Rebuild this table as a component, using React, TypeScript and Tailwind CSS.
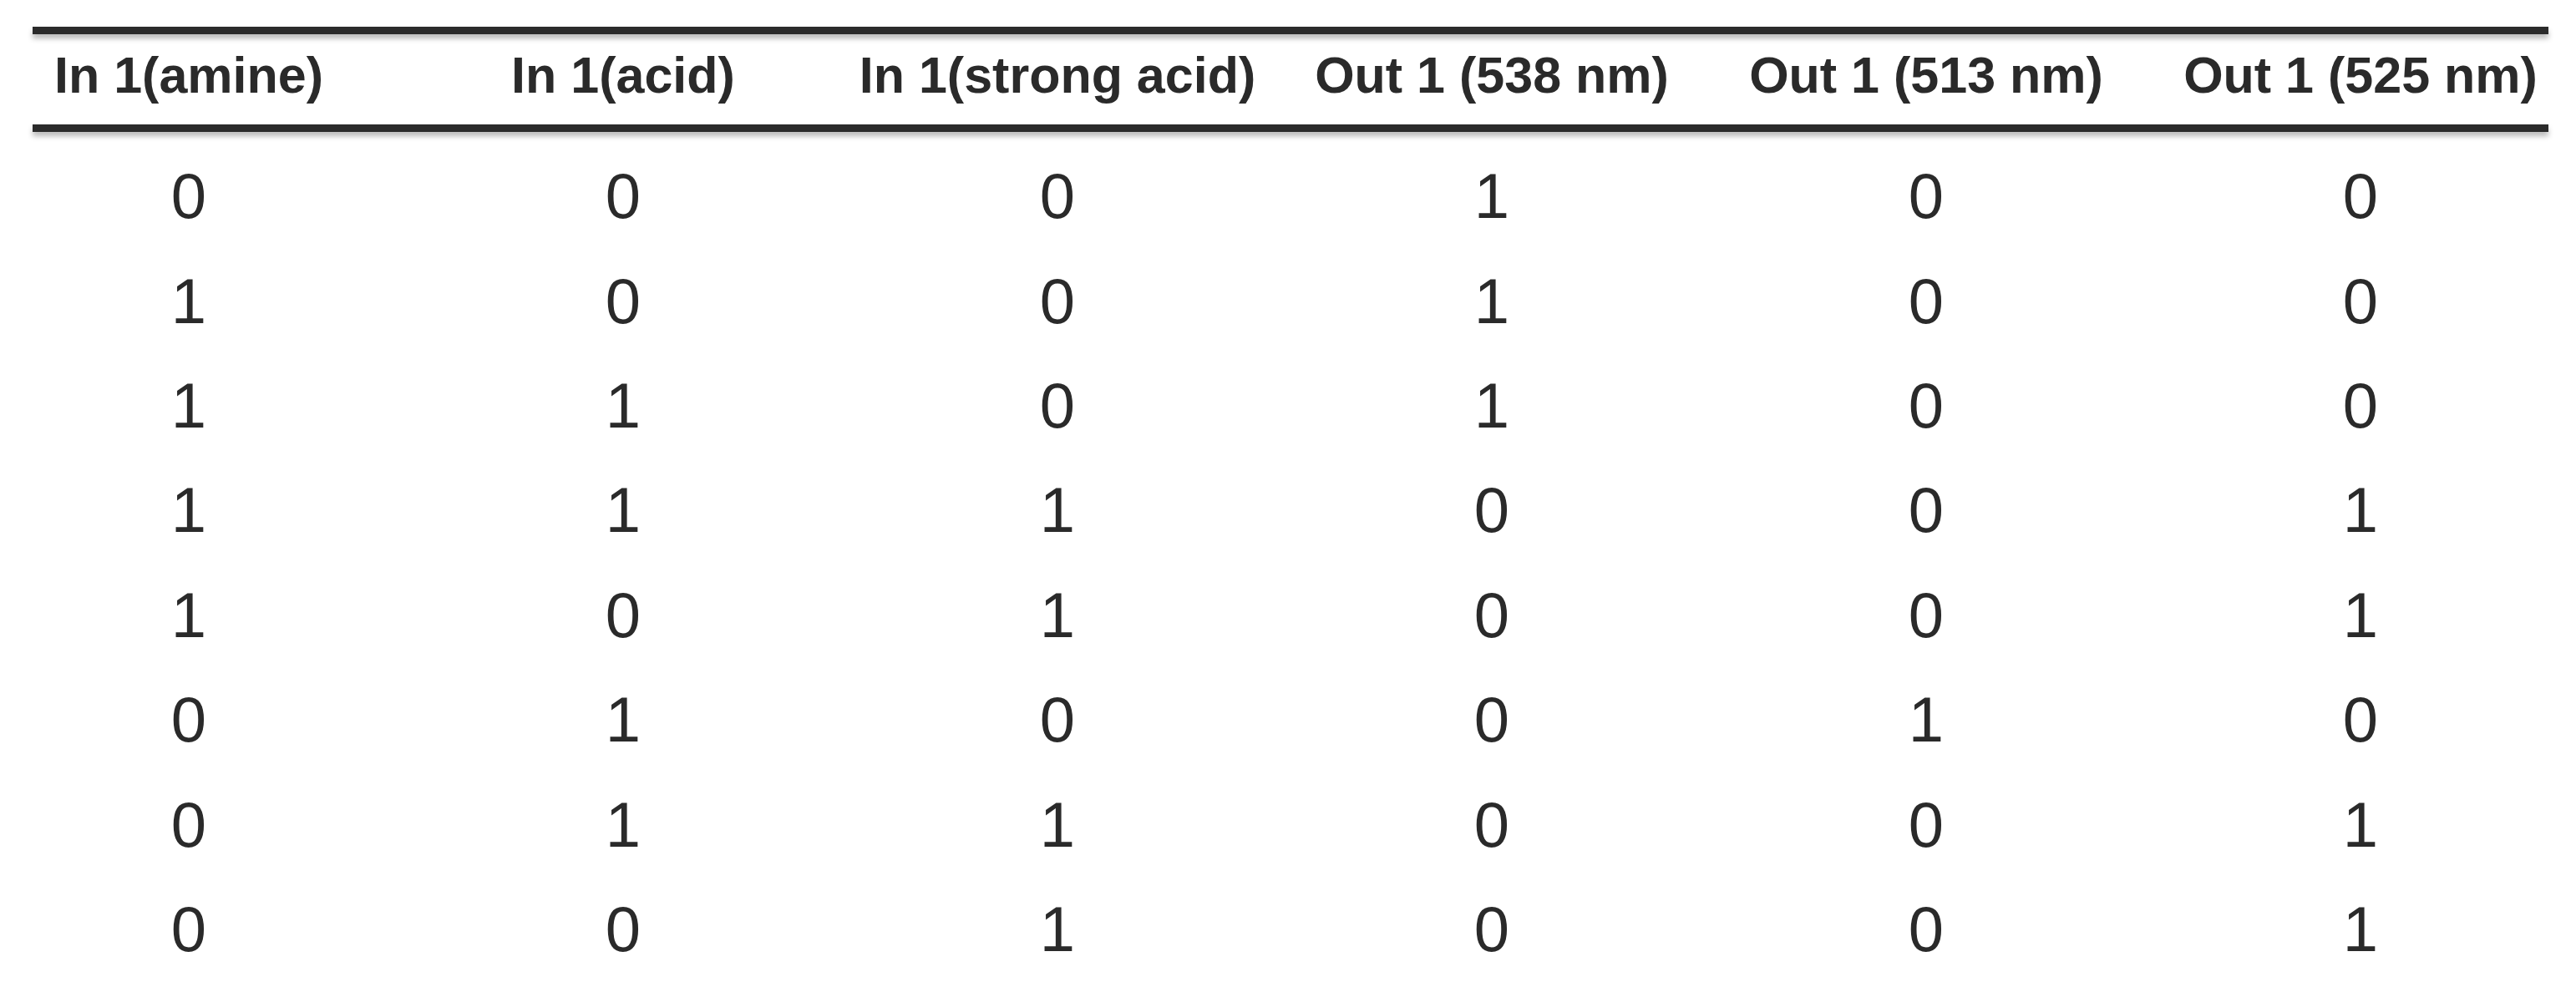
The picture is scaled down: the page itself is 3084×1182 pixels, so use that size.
import React from 'react';

const headers = [
    'In 1(amine)',
    'In 1(acid)',
    'In 1(strong acid)',
    'Out 1 (538 nm)',
    'Out 1 (513 nm)',
    'Out 1 (525 nm)',
];

// truth table rows: amine, acid, strong acid -> 538, 513, 525
const rows = [
    [0, 0, 0, 1, 0, 0],
    [1, 0, 0, 1, 0, 0],
    [1, 1, 0, 1, 0, 0],
    [1, 1, 1, 0, 0, 1],
    [1, 0, 1, 0, 0, 1],
    [0, 1, 0, 0, 1, 0],
    [0, 1, 1, 0, 0, 1],
    [0, 0, 1, 0, 0, 1],
];

function Rule() {
    return <div className="ml-[39px] w-[3012px] h-[9px] bg-[#2b2b2b] shadow-[0_5px_6px_rgba(0,0,0,0.28)]" />;
}

export default function App() {
    return (
        <div className="min-h-screen bg-white pt-[32px] text-[#2a2a2a] font-['Liberation_Sans',Arial,sans-serif]">
            <Rule />
            <div className="grid grid-cols-[repeat(6,440px)] gap-x-[80px] pl-[6px] h-[108px] pt-[14px]">
                {headers.map(h => (
                    <div key={h} className="flex justify-center whitespace-nowrap font-bold text-[61px] leading-[70px]">
                        {h}
                    </div>
                ))}
            </div>
            <Rule />
            <div className="pt-[14px] pl-[6px]">
                {rows.map((row, i) => (
                    <div key={i} className="grid grid-cols-[repeat(6,440px)] gap-x-[80px] h-[125.4px] items-center">
                        {row.map((v, j) => (
                            <div key={j} className="flex justify-center text-[76px] leading-[87px]">
                                {v}
                            </div>
                        ))}
                    </div>
                ))}
            </div>
        </div>
    );
}
